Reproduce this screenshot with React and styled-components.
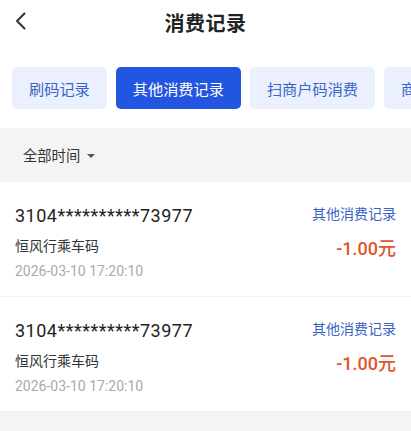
import React from 'react'
import styled, { createGlobalStyle } from 'styled-components'

const GlobalStyle = createGlobalStyle`
    body {
        margin: 0;
        background: #ffffff;
        font-family: Roboto, "Noto Sans CJK SC", sans-serif;
    }
`;

const Page = styled.div`
    width: 411px;
    min-height: 431px;
    background: #f4f4f4;
    overflow: hidden;
`

const Header = styled.div`
    position: relative;
    height: 44px;
    display: flex;
    align-items: center;
    justify-content: center;
    background: #fff;
`

const BackButton = styled.button`
    position: absolute;
    left: 10px;
    top: 12px;
    padding: 0 5px;
    border: 0;
    background: none;
    display: flex;
`

const Title = styled.h1`
    margin: 0;
    font-size: 20px;
    font-weight: 700;
    color: #222;
    letter-spacing: 0.5px;
`

const TabBar = styled.div`
    display: flex;
    gap: 9px;
    padding: 23px 0 19px 12px;
    background: #fff;
    white-space: nowrap;
    overflow: hidden;
`

const Tab = styled.div`
    flex: none;
    height: 42px;
    padding: 0 17px;
    display: flex;
    align-items: center;
    border-radius: 5px;
    font-size: 15.2px;
    background: ${props => props.active ? '#2356e0' : '#eaf0fd'};
    color: ${props => props.active ? '#ffffff' : '#3a63c8'};
`

const FilterBar = styled.div`
    height: 53px;
    display: flex;
    align-items: center;
    gap: 7px;
    padding-left: 23px;
    font-size: 14.3px;
    color: #333;
`

const Caret = styled.span`
    width: 0;
    height: 0;
    border-left: 4px solid transparent;
    border-right: 4px solid transparent;
    border-top: 4px solid #555;
    margin-top: 2px;
`

const List = styled.div`
    display: flex;
    flex-direction: column;
    gap: 1px;
    padding-top: 1px;
`

const Card = styled.div`
    display: flex;
    justify-content: space-between;
    padding: 22px 15px 16px;
    background: #fff;
`

const Column = styled.div`
    display: flex;
    flex-direction: column;
    align-items: ${props => props.right ? 'flex-end' : 'flex-start'};
`

const CardNo = styled.div`
    font-size: 18px;
    line-height: 24px;
    letter-spacing: 0.5px;
    color: #222;
`

const Name = styled.div`
    margin-top: 8px;
    font-size: 14px;
    line-height: 20px;
    color: #333;
`

const Time = styled.div`
    margin-top: 6px;
    font-size: 14px;
    line-height: 18px;
    color: #aaa;
`

const Kind = styled.div`
    font-size: 14px;
    line-height: 20px;
    color: #3a63c8;
`

const Amount = styled.div`
    margin-top: 13px;
    font-size: 18px;
    font-weight: 500;
    line-height: 24px;
    color: #e2552b;
`

const tabs = ['刷码记录', '其他消费记录', '扫商户码消费', '商户消费记录']

const records = [
    { no: '3104**********73977', name: '恒风行乘车码', time: '2026-03-10 17:20:10', kind: '其他消费记录', amount: '-1.00元' },
    { no: '3104**********73977', name: '恒风行乘车码', time: '2026-03-10 17:20:10', kind: '其他消费记录', amount: '-1.00元' },
]

const App = () => {
    return (
        <Page>
            <GlobalStyle />
            <Header>
                <BackButton>
                    <svg width="11" height="18" viewBox="0 0 11 18">
                        <polyline points="9.5,1.5 2,9 9.5,16.5" fill="none" stroke="#333" strokeWidth="2" strokeLinecap="round" strokeLinejoin="round" />
                    </svg>
                </BackButton>
                <Title>消费记录</Title>
            </Header>

            <TabBar>
                {tabs.map((t, i) => (
                    <Tab key={t} active={i === 1}>{t}</Tab>
                ))}
            </TabBar>

            <FilterBar>
                全部时间
                <Caret />
            </FilterBar>

            <List>
                {records.map((r, i) => (
                    <Card key={i}>
                        <Column>
                            <CardNo>{r.no}</CardNo>
                            <Name>{r.name}</Name>
                            <Time>{r.time}</Time>
                        </Column>
                        <Column right>
                            <Kind>{r.kind}</Kind>
                            <Amount>{r.amount}</Amount>
                        </Column>
                    </Card>
                ))}
            </List>
        </Page>
    )
}

export default App
